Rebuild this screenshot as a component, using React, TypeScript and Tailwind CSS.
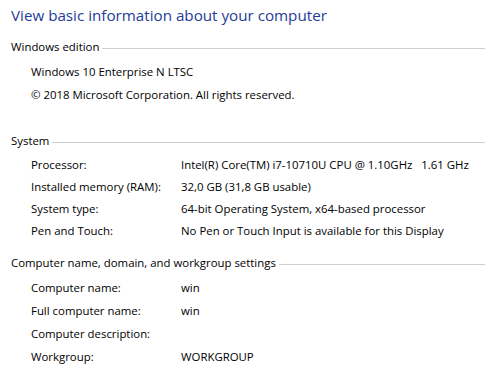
import React from "react";

type Row = { label: string; value?: string };

const edition = ["Windows 10 Enterprise N LTSC", "© 2018 Microsoft Corporation. All rights reserved."];

const system: Row[] = [
  { label: "Processor:", value: "Intel(R) Core(TM) i7-10710U CPU @ 1.10GHz\u00a0\u00a0\u00a01.61 GHz" },
  { label: "Installed memory (RAM):", value: "32,0 GB (31,8 GB usable)" },
  { label: "System type:", value: "64-bit Operating System, x64-based processor" },
  { label: "Pen and Touch:", value: "No Pen or Touch Input is available for this Display" },
];

const computer: Row[] = [
  { label: "Computer name:", value: "win" },
  { label: "Full computer name:", value: "win" },
  { label: "Computer description:" },
  { label: "Workgroup:", value: "WORKGROUP" },
];

const Heading = ({ text, className }: { text: string; className: string }) => (
  <div className={`flex items-center h-[20px] ${className}`}>
    <span className="whitespace-nowrap">{text}</span>
    <div className="flex-1 h-px bg-[#cfcfcf] ml-[3px] mt-[2px]" />
  </div>
);

const InfoRow = ({ row, h }: { row: Row; h: string }) => (
  <div className={`grid grid-cols-[150px_1fr] items-center pl-[20px] ${h}`}>
    <span className="whitespace-nowrap">{row.label}</span>
    <span className="whitespace-nowrap">{row.value}</span>
  </div>
);

export default function App() {
  return (
    <div
      className="w-[485px] h-[375px] bg-white overflow-hidden pl-[11px] text-[11.4px] text-black"
      style={{ fontFamily: '"Open Sans", "Noto Sans", sans-serif' }}
    >
      <h1 className="text-[15.2px] leading-[30px] text-[#1e3c96] whitespace-nowrap">
        View basic information about your computer
      </h1>

      <Heading text="Windows edition" className="mt-[7px]" />
      <div className="mt-[3px]">
        {edition.map((t) => (
          <div key={t} className="h-[23px] flex items-center pl-[20px] whitespace-nowrap">
            {t}
          </div>
        ))}
      </div>

      <Heading text="System" className="mt-[25px]" />
      <div className="mt-[3px]">
        {system.map((r) => (
          <InfoRow key={r.label} row={r} h="h-[22px]" />
        ))}
      </div>

      <Heading text="Computer name, domain, and workgroup settings" className="mt-[11px]" />
      <div className="mt-[3px]">
        {computer.map((r) => (
          <InfoRow key={r.label} row={r} h="h-[23px]" />
        ))}
      </div>
    </div>
  );
}
